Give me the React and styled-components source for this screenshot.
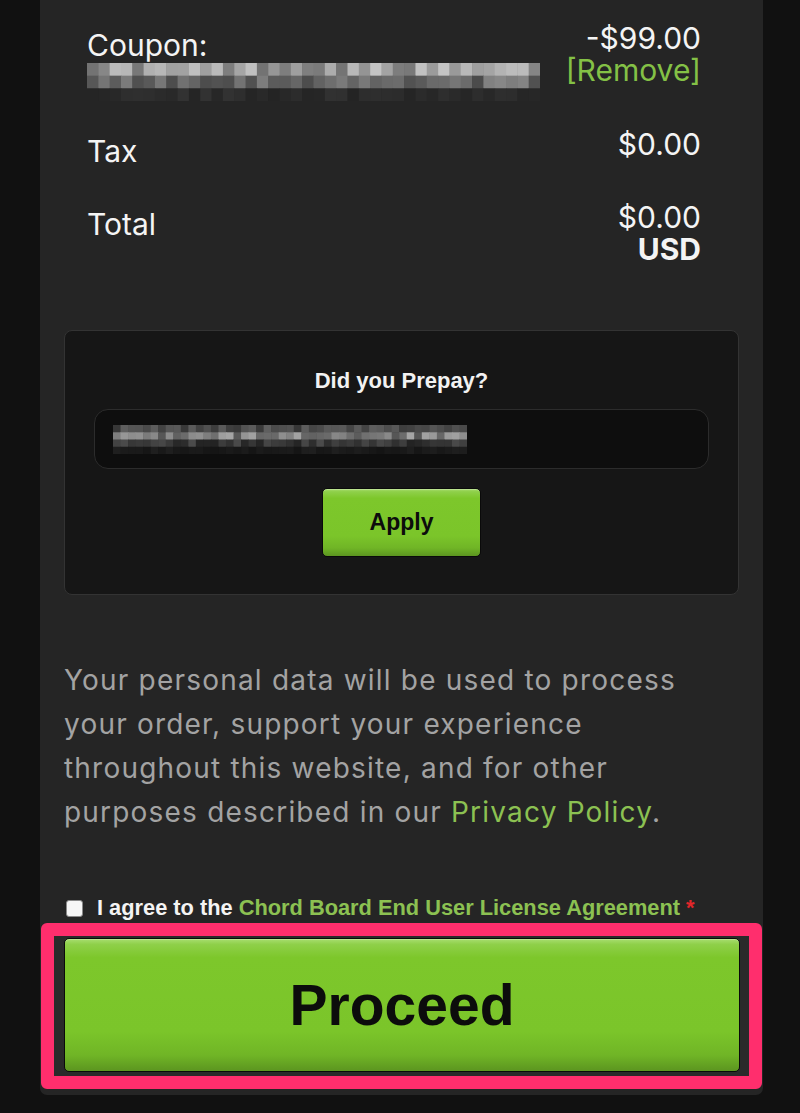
import React from "react";
import styled, { createGlobalStyle } from "styled-components";

const GlobalStyle = createGlobalStyle`
  html, body { margin: 0; padding: 0; background: #111111; }
  body { font-family: Inter, "Noto Sans", sans-serif; -webkit-font-smoothing: antialiased; }
  * { box-sizing: border-box; }
`;

const Page = styled.div`
  width: 800px;
  min-height: 1113px;
  background: #111111;
  padding: 0 37px 18px 40px;
`;

const Card = styled.div`
  background: #252525;
  border-radius: 0 0 7px 7px;
  padding: 0 24px 6px;
`;

const Summary = styled.div`
  padding: 22px 38px 0 23px;
  color: #f4f4f4;
  font-size: 30px;
  line-height: 32px;
`;

const Row = styled.div`
  display: flex;
  justify-content: space-between;
  align-items: flex-start;
  margin-top: ${(p) => p.$top || 0}px;
`;

const Label = styled.div`
  padding-top: 7px;
  display: flex;
  flex-direction: column;
  gap: 2px;
`;

const Values = styled.div`
  display: flex;
  flex-direction: column;
  align-items: flex-end;
  text-align: right;
`;

const ValueLine = styled.span`
  display: block;
  height: 32px;
  line-height: 32px;
  font-weight: ${(p) => (p.$bold ? 700 : 400)};
`;

const Remove = styled.a`
  display: block;
  height: 32px;
  line-height: 32px;
  color: #84c146;
  text-decoration: none;
`;

const PrepayBox = styled.div`
  margin-top: 65px;
  background: #161616;
  border: 1px solid #333333;
  border-radius: 8px;
  padding: 37px 29px 37px;
  display: flex;
  flex-direction: column;
  align-items: center;
`;

const PrepayTitle = styled.div`
  font-family: "Liberation Sans", Arial, sans-serif;
  font-weight: 700;
  font-size: 22px;
  line-height: 26px;
  color: #f2f2f2;
`;

const CodeInput = styled.div`
  margin-top: 15px;
  width: 100%;
  height: 60px;
  background: #0e0e0e;
  border: 1px solid #2c2c2c;
  border-radius: 14px;
  display: flex;
  align-items: center;
  padding-left: 18px;
`;

const GreenButton = styled.button`
  font-family: "Liberation Sans", Arial, sans-serif;
  font-weight: 700;
  color: #0c0c0c;
  border: 1px solid #0a0a0a;
  border-radius: 5px;
  cursor: pointer;
  background: linear-gradient(
    to bottom,
    #a8dd70 0%,
    #8fd04a 4%,
    #7dc72b 14%,
    #7bc52a 70%,
    #70b526 88%,
    #5c9520 100%
  );
  box-shadow: inset 0 1px 0 rgba(255, 255, 255, 0.25);
`;

const ApplyButton = styled(GreenButton)`
  margin-top: 19px;
  width: 159px;
  height: 69px;
  font-size: 23px;
`;

const Notice = styled.p`
  margin: 63px 0 0;
  font-size: 28px;
  line-height: 44px;
  color: #a3a3a3;
  letter-spacing: 1.2px;
`;

const Link = styled.a`
  color: #8cc152;
  text-decoration: none;
`;

const AgreeRow = styled.label`
  margin-top: 62px;
  display: flex;
  align-items: center;
  gap: 14px;
  padding-left: 2px;
  font-family: "Liberation Sans", Arial, sans-serif;
  font-weight: 700;
  font-size: 21.8px;
  line-height: 24px;
  color: #f4f4f4;
  white-space: nowrap;
`;

const Check = styled.input`
  appearance: none;
  margin: 0;
  width: 17px;
  height: 17px;
  background: #f6f6f6;
  border: 1px solid #8a8a8a;
  border-radius: 3px;
  flex: none;
`;

const Required = styled.span`
  color: #e3262a;
`;

const Highlight = styled.div`
  margin: 3px -23px 0 -23px;
  border: 13px solid #ff2e6d;
  border-radius: 6px;
  padding: 2px 9px 4px 10px;
  background: #2a2a2a;
`;

const ProceedButton = styled(GreenButton)`
  display: block;
  width: 100%;
  height: 134px;
  font-size: 57px;
  border-radius: 5px;
`;

function rng(seed) {
  let s = seed;
  return () => {
    s = (s * 16807) % 2147483647;
    return (s - 1) / 2147483646;
  };
}

function PixelBlur({ width, height, cols, bands, seed }) {
  const rand = rng(seed);
  const cw = width / cols;
  const rh = height / bands.length;
  const rects = [];
  bands.forEach(([lo, hi], r) => {
    for (let c = 0; c < cols; c++) {
      const v = Math.round(lo + rand() * (hi - lo));
      rects.push(
        <rect
          key={`${r}-${c}`}
          x={c * cw}
          y={r * rh}
          width={cw + 0.5}
          height={rh + 0.5}
          fill={`rgb(${v},${v},${v})`}
        />
      );
    }
  });
  return (
    <svg width={width} height={height} viewBox={`0 0 ${width} ${height}`} style={{ display: "block" }}>
      {rects}
    </svg>
  );
}

export default function App() {
  return (
    <>
      <GlobalStyle />
      <Page>
        <Card>
          <Summary>
            <Row>
              <Label>
                <span>Coupon:</span>
                <PixelBlur
                  width={453}
                  height={38}
                  cols={40}
                  seed={17}
                  bands={[
                    [115, 200],
                    [75, 135],
                    [36, 50],
                  ]}
                />
              </Label>
              <Values>
                <ValueLine>-$99.00</ValueLine>
                <Remove href="#">[Remove]</Remove>
              </Values>
            </Row>
            <Row $top={27}>
              <Label>Tax</Label>
              <Values>
                <ValueLine>$0.00</ValueLine>
              </Values>
            </Row>
            <Row $top={34}>
              <Label>Total</Label>
              <Values>
                <ValueLine>$0.00</ValueLine>
                <ValueLine $bold>USD</ValueLine>
              </Values>
            </Row>
          </Summary>

          <PrepayBox>
            <PrepayTitle>Did you Prepay?</PrepayTitle>
            <CodeInput>
              <PixelBlur
                width={354}
                height={29}
                cols={47}
                seed={91}
                bands={[
                  [55, 95],
                  [85, 165],
                  [35, 75],
                  [20, 32],
                ]}
              />
            </CodeInput>
            <ApplyButton>Apply</ApplyButton>
          </PrepayBox>

          <Notice>
            Your personal data will be used to process
            <br />
            your order, support your experience
            <br />
            throughout this website, and for other
            <br />
            purposes described in our <Link href="#">Privacy Policy</Link>.
          </Notice>

          <AgreeRow>
            <Check type="checkbox" />
            <span>
              I agree to the <Link href="#">Chord Board End User License Agreement</Link>{" "}
              <Required>*</Required>
            </span>
          </AgreeRow>

          <Highlight>
            <ProceedButton>Proceed</ProceedButton>
          </Highlight>
        </Card>
      </Page>
    </>
  );
}
